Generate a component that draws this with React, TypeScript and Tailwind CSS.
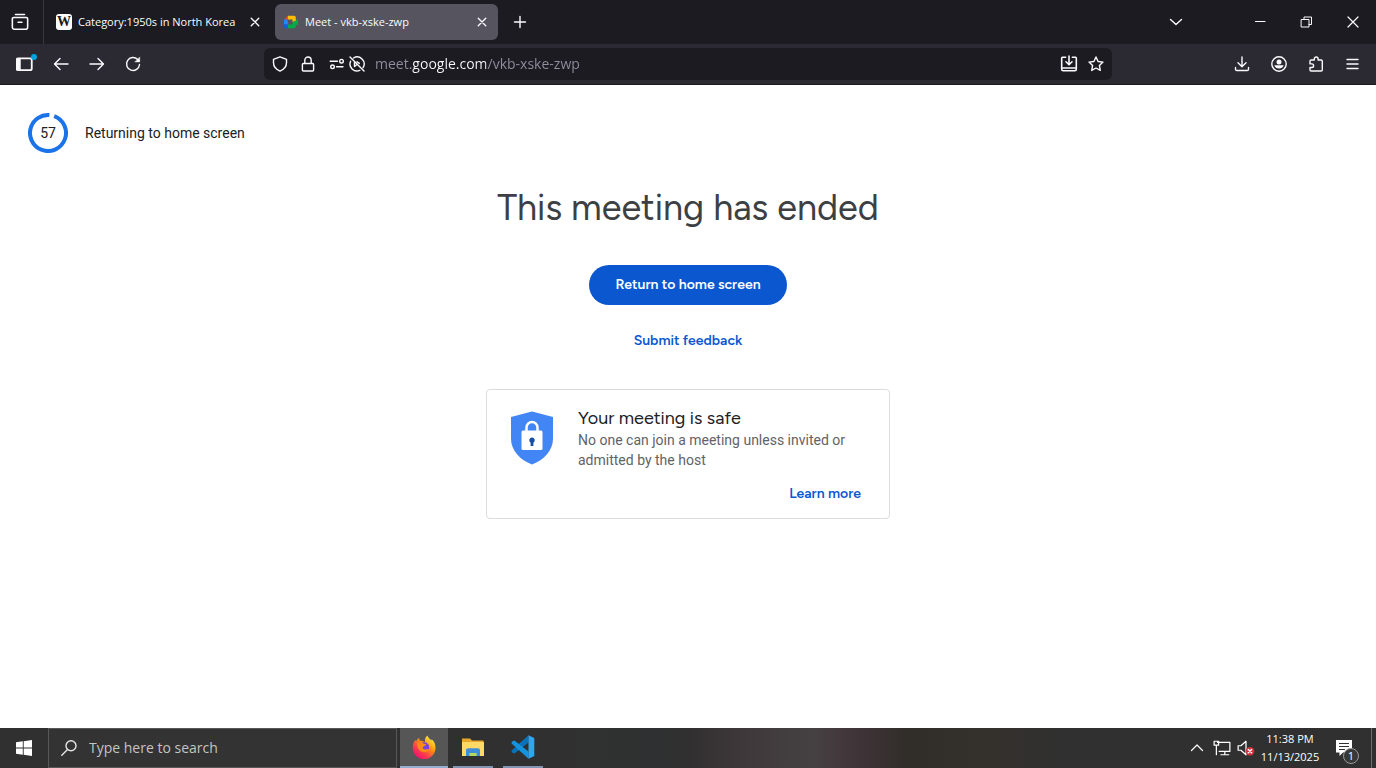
import type { ReactNode } from "react";

const stroke = {
  fill: "none",
  stroke: "currentColor",
  strokeWidth: 1.4,
  strokeLinecap: "round",
  strokeLinejoin: "round"
} as const;

function Icon({ children, className = "size-4" }: { children: ReactNode; className?: string }) {
  return (
    <svg viewBox="0 0 16 16" className={`shrink-0 ${className}`} aria-hidden="true" {...stroke}>
      {children}
    </svg>
  );
}

function ToolbarButton({ label, children }: { label: string; children: ReactNode }) {
  return (
    <button aria-label={label} className="relative flex h-8 w-9 shrink-0 items-center justify-center rounded">
      {children}
    </button>
  );
}

function WindowButton({ label, children }: { label: string; children: ReactNode }) {
  return (
    <button aria-label={label} className="flex w-[46px] items-center justify-center self-stretch">
      {children}
    </button>
  );
}

function WikipediaFavicon() {
  return (
    <span
      aria-hidden="true"
      className="flex size-4 shrink-0 items-center justify-center rounded-[3px] bg-white font-['Liberation_Serif',serif] text-sm font-bold text-[#1c1b22]"
    >
      W
    </span>
  );
}

function MeetFavicon() {
  return (
    <svg viewBox="0 0 16 16" className="size-4 shrink-0" aria-hidden="true">
      <path d="M1 5.5L4.8 1.8V5.5z" fill="#ea4335" />
      <path d="M4.8 1.8h6.4a1.6 1.6 0 0 1 1.6 1.6V7L9.5 8V5.5H4.8z" fill="#fbbc04" />
      <path d="M1 5.5h3.8v5H1z" fill="#2684fc" />
      <path d="M1 10.5h3.8v3.7H2.4A1.4 1.4 0 0 1 1 12.8z" fill="#0066da" />
      <path d="M4.8 10.5h4.7V8l3.3-1 2.2-2.4v7.2l-2.2-1.6v2.4a1.6 1.6 0 0 1-1.6 1.6H4.8z" fill="#00ac47" />
    </svg>
  );
}

function Tab({ title, icon, active = false }: { title: string; icon: ReactNode; active?: boolean }) {
  return (
    <div className={`ml-1 flex h-9 w-[223px] items-center rounded-md pl-2 pr-2.5 ${active ? "bg-[#55545f]" : ""}`}>
      {icon}
      <span className="ml-1.5 flex-1 whitespace-nowrap text-[11px]">{title}</span>
      <button aria-label={`Close ${title}`}>
        <Icon className="size-3">
          <path strokeWidth="1.8" d="M3 3l10 10M13 3L3 13" />
        </Icon>
      </button>
    </div>
  );
}

function TabStrip() {
  return (
    <div className="flex h-11 items-center bg-[#1c1b22]">
      <button
        aria-label="View recent browsing"
        className="flex w-11 items-center justify-center self-stretch border-r border-[#38373f] pr-1"
      >
        <Icon className="size-[18px]">
          <path d="M4 1.3h8M2.4 4h11.2c.7 0 1.2.5 1.2 1.2v7.4c0 1-.8 1.8-1.8 1.8H3c-1 0-1.8-.8-1.8-1.8V5.2c0-.7.5-1.2 1.2-1.2zM6.3 8.2h3.4" />
        </Icon>
      </button>

      <Tab title="Category:1950s in North Korea" icon={<WikipediaFavicon />} />
      <Tab title="Meet - vkb-xske-zwp" icon={<MeetFavicon />} active />

      <button aria-label="New tab" className="ml-1 flex size-9 items-center justify-center">
        <Icon>
          <path d="M8 2.5v11M2.5 8h11" />
        </Icon>
      </button>

      <div className="ml-auto flex items-center self-stretch">
        <button aria-label="List all tabs" className="mr-11 flex size-9 items-center justify-center">
          <Icon>
            <path d="M2.5 5.5L8 10.5l5.5-5" />
          </Icon>
        </button>
        <WindowButton label="Minimize">
          <Icon>
            <path strokeWidth="1.2" d="M2.5 7.5h9.5" />
          </Icon>
        </WindowButton>
        <WindowButton label="Restore">
          <Icon>
            <path strokeWidth="1" d="M2.5 5.5H10V13H2.5zM5 5.5V3h7.5v7.5H10" />
          </Icon>
        </WindowButton>
        <WindowButton label="Close window">
          <Icon>
            <path strokeWidth="1.2" d="M3 3l10 10M13 3L3 13" />
          </Icon>
        </WindowButton>
      </div>
    </div>
  );
}

function AddressBar() {
  return (
    <div className="ml-[113px] mr-28 flex h-8 min-w-0 flex-1 items-center rounded-md bg-[#1c1b22] px-2">
      <button aria-label="Tracking protection">
        <Icon>
          <path d="M8 .9l6.5 2.5v3.4c0 3.7-2.7 6.7-6.5 8.3-3.8-1.6-6.5-4.6-6.5-8.3V3.4z" />
        </Icon>
      </button>
      <button aria-label="Connection secure" className="ml-3">
        <Icon>
          <path d="M3.4 7.5h9.2c.6 0 1 .4 1 1V14c0 .6-.4 1-1 1H3.4c-.6 0-1-.4-1-1V8.5c0-.6.4-1 1-1zM4.8 7.500V4.2a3.2 3.2 0 0 1 6.4 0v3.3" />
        </Icon>
      </button>
      <button aria-label="Site permissions" className="ml-[13px]">
        <Icon>
          <path d="M1.2 5.2h7.3M7.500 10.800H14" />
          <circle cx="12.5" cy="5.2" r="1.8" />
          <circle cx="3.5" cy="10.8" r="1.8" />
        </Icon>
      </button>
      <button aria-label="Autoplay blocked" className="ml-1">
        <Icon>
          <path d="M1 1l14 14M4.5 2a7 7 0 0 1 9.6 9.6M1.6 5.2a7 7 0 0 0 9.2 9.2M5.500 6v4.500l2.200-1.700M8 5.800l2.300 1.600" />
        </Icon>
      </button>
      <input
        aria-label="Search or enter address"
        defaultValue="meet.google.com/vkb-xske-zwp"
        className="ml-2.5 min-w-0 flex-1 bg-[linear-gradient(to_right,#8f8f9d_37px,#fbfbfe_37px,#fbfbfe_111px,#8f8f9d_111px)] bg-clip-text text-sm text-transparent caret-white outline-none"
      />
      <button aria-label="Install this site">
        <Icon className="size-[18px]">
          <path d="M5 2H2.2c-.4 0-.7.3-.7.7v10c0 .7.6 1.3 1.3 1.3h10.4c.7 0 1.3-.6 1.3-1.3v-10c0-.4-.3-.7-.7-.7H11M1.500 11.500h13M8 1v7.500M5.300 6L8 8.700 10.700 6" />
        </Icon>
      </button>
      <button aria-label="Bookmark this page" className="ml-2.5">
        <Icon>
          <path d="M8 1l2.1 4.5 4.9.6-3.6 3.4.9 4.9L8 12l-4.3 2.400.9-4.900L1 6.100l4.900-.6z" />
        </Icon>
      </button>
    </div>
  );
}

function Toolbar() {
  return (
    <div className="flex h-[41px] items-center border-b border-[#1c1b22] bg-[#2b2a33] pl-[7px] pr-[5px]">
      <ToolbarButton label="Show sidebar">
        <Icon className="size-[18px]">
          <rect x="0.500" y="3" width="13.500" height="10.500" rx="1.500" strokeWidth="1.600" />
          <path d="M1 4h2.500v9H1z" fill="currentColor" />
        </Icon>
        <span className="absolute right-1.5 top-1.5 size-1.5 rounded-full bg-[#00a5dd]" />
      </ToolbarButton>
      <ToolbarButton label="Back">
        <Icon>
          <path d="M15 8H1.5M7 2.5L1.5 8 7 13.5" />
        </Icon>
      </ToolbarButton>
      <ToolbarButton label="Forward">
        <Icon>
          <path d="M1 8h13.5M9 2.5L14.5 8 9 13.5" />
        </Icon>
      </ToolbarButton>
      <ToolbarButton label="Reload">
        <Icon>
          <path d="M14.5 8.5A6.5 6.5 0 1 1 12.7 3.5L14 4.8" />
          <path d="M14.7 1.3v4.6h-4.6z" fill="currentColor" strokeWidth="0.5" />
        </Icon>
      </ToolbarButton>

      <AddressBar />

      <div className="flex gap-px">
        <ToolbarButton label="Downloads">
          <Icon>
            <path d="M8 1v9.5M4 6.8l4 4 4-4M1.5 11.5v1.7c0 .7.6 1.3 1.3 1.3h10.4c.7 0 1.3-.6 1.3-1.3v-1.7" />
          </Icon>
        </ToolbarButton>
        <ToolbarButton label="Account">
          <Icon>
            <circle cx="8" cy="8" r="7.2" />
            <circle cx="8" cy="6" r="2.5" fill="currentColor" stroke="none" />
            <path d="M3.3 9.3h9.4a5 5 0 0 1-9.4 0z" fill="currentColor" stroke="none" />
          </Icon>
        </ToolbarButton>
        <ToolbarButton label="Extensions">
          <Icon>
            <path d="M6.3 4V2.9a1.9 1.9 0 0 1 3.8 0V4h3c.7 0 1.2.5 1.2 1.2v8.6c0 .7-.5 1.2-1.2 1.2H3.2c-.7 0-1.2-.5-1.2-1.2v-2.3h1.8a1.800 1.800 0 0 0 0-3.600H2V5.200C2 4.500 2.500 4 3.200 4z" />
          </Icon>
        </ToolbarButton>
        <ToolbarButton label="Open application menu">
          <Icon>
            <path d="M2 3.5h11M2 8h11M2 12.5h11" />
          </Icon>
        </ToolbarButton>
      </div>
    </div>
  );
}

function Countdown({ seconds }: { seconds: number }) {
  const total = 60;
  const length = 2 * Math.PI * 18;

  return (
    <div className="flex items-center gap-[17px] text-sm text-[#202124]">
      <div className="grid size-10 place-items-center">
        <svg viewBox="0 0 40 40" className="col-start-1 row-start-1 size-full" aria-hidden="true">
          <circle
            cx="20"
            cy="20"
            r="18"
            fill="none"
            stroke="#1a73e8"
            strokeWidth="4"
            strokeDasharray={`${(length * seconds) / total} ${length}`}
            transform="rotate(-70 20 20)"
          />
        </svg>
        <span className="col-start-1 row-start-1">{seconds}</span>
      </div>
      <p>Returning to home screen</p>
    </div>
  );
}

function ShieldLock() {
  return (
    <svg viewBox="0 0 42 54" className="h-[54px] w-[42px] shrink-0" aria-hidden="true">
      <path d="M21 0.5L42 6v21.5C42 39.5 33 49 21 53.5 9 49 0 39.5 0 27.5V6z" fill="#4285f4" />
      <path d="M15.5 20v-3.5a5.5 5.5 0 0 1 11 0V20" fill="none" stroke="#fff" strokeWidth="2.5" />
      <rect x="10.5" y="19.5" width="21" height="19.5" rx="1.5" fill="#fff" />
      <path d="M21 26.5a2.8 2.8 0 0 1 1.4 5.2V35h-2.8v-3.3A2.8 2.8 0 0 1 21 26.500z" fill="#174ea6" />
    </svg>
  );
}

function MeetingEnded() {
  return (
    <main className="flex-1 bg-white px-7 pt-7 font-[Roboto,sans-serif]">
      <Countdown seconds={57} />

      <div className="mt-[33px] flex flex-col items-center font-[Figtree,Lato,sans-serif]">
        <h1 className="text-4xl leading-11 text-[#3c4043]">This meeting has ended</h1>
        <button className="mt-[35px] h-10 min-w-[198px] rounded-full bg-[#0b57d0] px-6 text-sm font-semibold text-white">
          Return to home screen
        </button>
        <button className="mt-[18px] h-9 px-3 text-sm font-semibold text-[#0b57d0]">Submit feedback</button>

        <section className="mt-[30px] w-full max-w-[404px] rounded border border-[#dadce0] px-6 pb-1.5 pt-4">
          <div className="flex gap-[25px]">
            <div className="pt-[5px]">
              <ShieldLock />
            </div>
            <div>
              <h2 className="text-lg leading-6 text-[#202124]">Your meeting is safe</h2>
              <p className="font-[Roboto,sans-serif] text-sm text-[#5f6368]">
                No one can join a meeting unless invited or admitted by the host
              </p>
            </div>
          </div>
          <div className="mt-1.5 flex justify-end pr-1">
            <a href="#safety" className="text-sm leading-9 font-semibold text-[#0b57d0]">
              Learn more
            </a>
          </div>
        </section>
      </div>
    </main>
  );
}

function FirefoxLogo() {
  return (
    <svg viewBox="0 0 24 24" className="size-6" aria-hidden="true">
      <defs>
        <linearGradient id="fox" x1="0.9" y1="0.1" x2="0.2" y2="1">
          <stop offset="0" stopColor="#fff44f" />
          <stop offset="0.35" stopColor="#ff980e" />
          <stop offset="0.7" stopColor="#ff3750" />
          <stop offset="1" stopColor="#eb0878" />
        </linearGradient>
      </defs>
      <path
        d="M15.5.5c.2 2.3 2.6 3.3 4 5.2-.1-.6-.1-1.1-.4-1.7 2.8 1.7 4.4 5 4.4 8.7A11.4 11.4 0 0 1 .7 13C.5 9.7 1.7 6.7 3.5 4.7c.1.8.2 1.3.5 1.7C5.5 4 6.7 3.3 7.3 2.8c-.1 1.5.2 2.3.8 2.9 2 0 3.8.7 5 1.6C12.5 4.5 13.5 1.7 15.5.5z"
        fill="url(#fox)"
      />
      <circle cx="12.2" cy="12.3" r="5" fill="#7542e5" />
      <path
        d="M5 8.5c1.5-1.7 4-1.7 6.5 0 1 .5 2.3.3 2.7.9.2 1-2.6 1.6-3.4 2.7-.5 1.3.8 2.6 2.5 2.3 1.7-.3 2.7-1 3.8.1-1 2-3.2 3.2-5.7 2.7-4-.7-6.2-4-6.4-8.7z"
        fill="#ff8a16"
      />
    </svg>
  );
}

function FolderLogo() {
  return (
    <svg viewBox="0 0 24 24" className="size-6" aria-hidden="true">
      <path d="M1 3.5h8l2 2h11.5V21H1z" fill="#e8a92b" />
      <path d="M1 7h22v14H1z" fill="#ffd968" />
      <path d="M5 21v-5.500c0-1.400.8-2.200 2.200-2.200h9.600c1.400 0 2.200.8 2.200 2.200V21h-3.700v-3H8.700v3z" fill="#3d8fd9" />
      <path d="M8.700 18h6.600v3H8.700z" fill="#b5d95b" />
    </svg>
  );
}

function CodeLogo() {
  return (
    <svg viewBox="0 0 24 24" className="size-6" aria-hidden="true">
      <path d="M.6 15.600L17.500.3V7.500L3.400 18.500.6 17.200z" fill="#0873ba" />
      <path d="M.6 8.400L.6 6.800 3.400 5.500 17.500 16.500v7.200z" fill="#1593dc" />
      <path d="M17.500.3L23.300 3v18l-5.800 2.700z" fill="#2da8ef" />
    </svg>
  );
}

const apps = [
  { name: "File Explorer", logo: <FolderLogo /> },
  { name: "Visual Studio Code", logo: <CodeLogo /> }
];

function Taskbar() {
  return (
    <footer className="flex h-10 items-center bg-[linear-gradient(to_right,#303030_41%,#2e3131_48%,#312f30_50%,#3f383b_54%,#454142_59%,#43393c_61%,#3d3337_63%,#312d28_66%,#34302c_72%,#303030_77%)] font-['Open_Sans','Noto_Sans',sans-serif] text-white">
      <button aria-label="Start" className="flex w-12 items-center justify-center self-stretch">
        <svg viewBox="0 0 16 16" className="size-4" fill="#fff" aria-hidden="true">
          <path d="M0 2.2L6.8 1.3v6.3H0zM7.7 1.2L16 0v7.6H7.7zM0 8.4h6.8v6.3L0 13.8zM7.7 8.4H16V16l-8.3-1.2z" />
        </svg>
      </button>
      <label className="flex w-[349px] items-center gap-3 self-stretch border border-[#585858] bg-[#333] pl-3">
        <svg viewBox="0 0 16 16" className="size-4 shrink-0 text-[#e5e5e5]" aria-hidden="true" {...stroke}>
          <circle cx="10" cy="5.8" r="5" />
          <path d="M6.5 9.4L.8 15.2" />
        </svg>
        <input
          aria-label="Search Windows"
          placeholder="Type here to search"
          className="min-w-0 flex-1 bg-transparent text-sm outline-none placeholder:text-[#c4c4c4]"
        />
      </label>

      <button
        aria-label="Firefox"
        className="ml-[3px] flex w-12 items-center justify-center self-stretch border-b-2 border-[#93aed0] bg-[#565656]"
      >
        <FirefoxLogo />
      </button>
      {apps.map((app) => (
        <div key={app.name} className="flex w-[50px] justify-center self-stretch">
          <button aria-label={app.name} className="flex w-10 items-center justify-center border-b-2 border-[#8195b3]">
            {app.logo}
          </button>
        </div>
      ))}

      <div className="ml-auto flex items-center self-stretch">
        <button aria-label="Show hidden icons">
          <Icon>
            <path strokeWidth="1.2" d="M2.5 10.5L8 5l5.5 5.5" />
          </Icon>
        </button>
        <button aria-label="Network" className="ml-2">
          <Icon className="size-[18px]">
            <path strokeWidth="1.1" d="M4 3h11v8H5.5M7 14h7M10.5 11v3M1 2h4v3.5H1zM3 5.5V14" />
          </Icon>
        </button>
        <button aria-label="Volume muted" className="ml-1.5">
          <Icon className="size-[18px]">
            <path strokeWidth="1.1" d="M1 6v4h2.5L8 14V2L3.5 6z" />
            <circle cx="11.5" cy="10.8" r="3.8" fill="#d9303e" stroke="none" />
            <path strokeWidth="1.2" d="M10 9.3l3 3M13 9.3l-3 3" />
          </Icon>
        </button>
        <button className="ml-1 w-[62px] text-center text-[11px] leading-[18px] whitespace-nowrap">
          <time dateTime="2025-11-13T23:38">
            11:38 PM
            <br />
            11/13/2025
          </time>
        </button>
        <button aria-label="Notifications" className="relative ml-3.5 flex h-10 w-6 items-center">
          <svg viewBox="0 0 18 18" className="size-[18px]" aria-hidden="true">
            <path d="M1 1h16v12.5H8L4.5 17v-3.5H1z" fill="#fff" />
            <path d="M4 4.5h10M4 7.5h10M4 10.5h6" stroke="#303030" strokeWidth="1.2" />
          </svg>
          <span className="absolute bottom-1 right-0 flex size-4 items-center justify-center rounded-full border border-[#999] bg-[#383838] text-[11px]">
            1
          </span>
        </button>
        <span className="ml-3 mr-1 w-px self-stretch bg-[#707070]" />
      </div>
    </footer>
  );
}

export default function App() {
  return (
    <div className="flex min-h-screen flex-col">
      <header className="font-['Open_Sans','Noto_Sans',sans-serif] text-[#fbfbfe]">
        <TabStrip />
        <Toolbar />
      </header>
      <MeetingEnded />
      <Taskbar />
    </div>
  );
}
